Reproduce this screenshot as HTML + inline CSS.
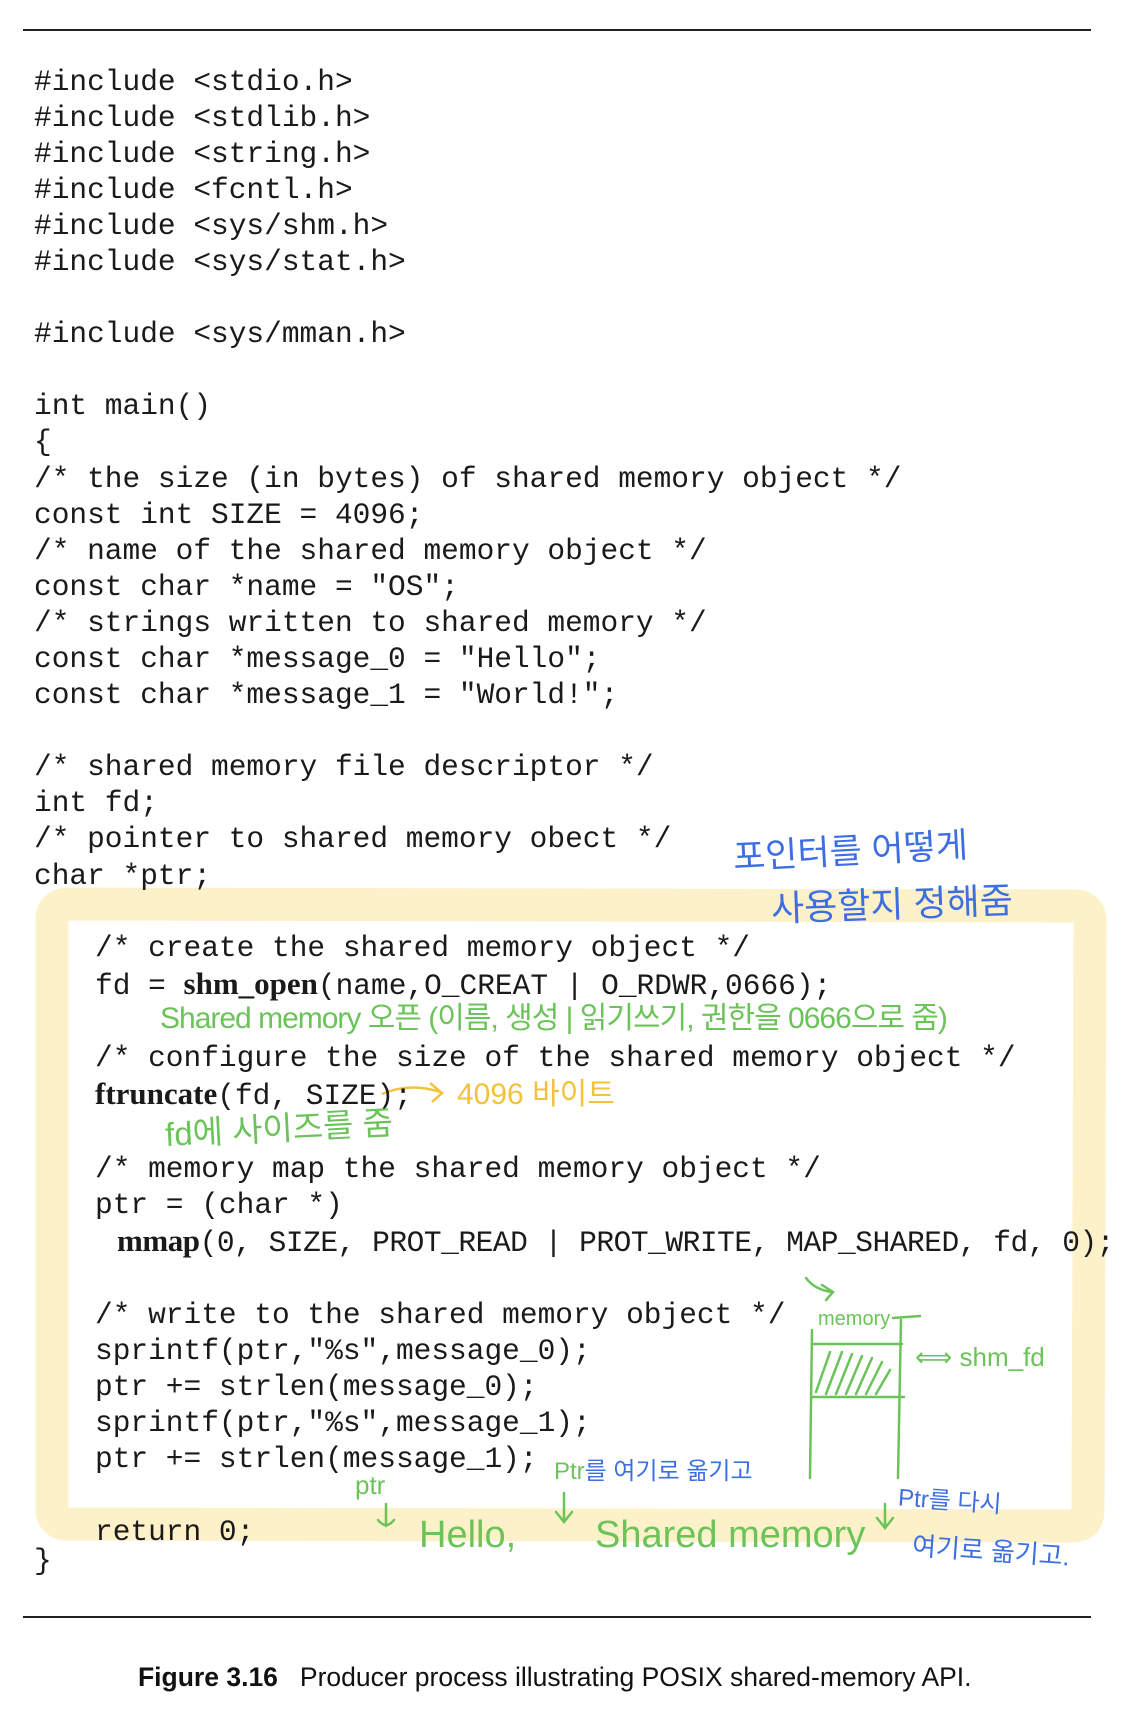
<!DOCTYPE html>
<html><head><meta charset="utf-8">
<style>
html,body{margin:0;padding:0;background:#fff;}
body{width:1146px;height:1728px;position:relative;overflow:hidden;}
.rule{position:absolute;left:23px;width:1068px;height:2px;background:#222;}
pre{position:absolute;margin:0;font-family:"Liberation Mono",monospace;font-size:29.5px;line-height:36.1px;color:#1a1a1a;}
b{font-family:"Liberation Serif",serif;font-weight:bold;font-size:31px;}
.a{position:absolute;white-space:nowrap;font-family:"Liberation Sans","Noto Sans CJK KR",sans-serif;line-height:1;}
.g{color:#6cc35a;}
.bl{color:#3d6fe3;}
.y{color:#f3c23c;}
.cap{position:absolute;top:1662px;left:138px;font-family:"Liberation Sans",sans-serif;font-size:26.5px;color:#111;white-space:nowrap;}
</style></head><body>
<div class="rule" style="top:29px"></div>
<div class="rule" style="top:1616px"></div>

<svg width="1146" height="1728" style="position:absolute;left:0;top:0">
<path d="M70 904 L1074 906 Q1090 906 1090 922 L1088 1510 Q1088 1526 1072 1526 L68 1524 Q52 1524 52 1508 L52 920 Q52 904 70 904 Z" fill="none" stroke="#fcefc0" stroke-width="33" stroke-linejoin="round" opacity="0.85"/>
<g stroke="#6cc35a" stroke-width="2.5" fill="none" stroke-linecap="round">
<path d="M806 1278 Q815 1290 832 1292 M822 1285 L833 1292 L826 1300"/>
<path d="M893 1318 L920 1316"/>
<path d="M812 1330 L810 1478"/>
<path d="M901 1320 L898 1478"/>
<path d="M812 1344 L902 1344 M812 1397 L904 1397"/>
<path d="M816 1392 L830 1352 M826 1394 L842 1352 M836 1394 L852 1354 M846 1394 L862 1356 M856 1394 L872 1358 M866 1394 L882 1362 M876 1394 L890 1370"/>
<path d="M386 1504 L386 1526 M378 1520 Q386 1530 394 1520"/>
<path d="M564 1493 L564 1520 M556 1512 L564 1522 L572 1512"/>
<path d="M885 1504 L885 1526 M877 1518 L885 1528 L893 1518"/>
</g>
<path d="M382 1094 Q410 1082 440 1092 M430 1083 L442 1093 L432 1102" stroke="#f3c23c" stroke-width="2.5" fill="none"/>
</svg>

<pre style="left:34px;top:63.5px">#include &lt;stdio.h&gt;
#include &lt;stdlib.h&gt;
#include &lt;string.h&gt;
#include &lt;fcntl.h&gt;
#include &lt;sys/shm.h&gt;
#include &lt;sys/stat.h&gt;

#include &lt;sys/mman.h&gt;

int main()
{
/* the size (in bytes) of shared memory object */
const int SIZE = 4096;
/* name of the shared memory object */
const char *name = "OS";
/* strings written to shared memory */
const char *message_0 = "Hello";
const char *message_1 = "World!";

/* shared memory file descriptor */
int fd;
/* pointer to shared memory obect */
char *ptr;</pre>

<pre style="left:95px;top:930px">/* create the shared memory object */
fd = <b>shm_open</b>(name,O_CREAT | O_RDWR,0666);

/* configure the size of the shared memory object */
<b>ftruncate</b>(fd, SIZE);

/* memory map the shared memory object */
ptr = (char *)
<span style="letter-spacing:-0.45px;padding-left:22px"><b>mmap</b>(0, SIZE, PROT_READ | PROT_WRITE, MAP_SHARED, fd, 0);</span>

/* write to the shared memory object */
sprintf(ptr,"%s",message_0);
ptr += strlen(message_0);
sprintf(ptr,"%s",message_1);
ptr += strlen(message_1);

return 0;</pre>
<pre style="left:34px;top:1543px">}</pre>

<div class="a bl" style="left:733px;top:834px;font-size:35px;transform:rotate(-3deg)">포인터를 어떻게</div>
<div class="a bl" style="left:771px;top:887px;font-size:36px;transform:rotate(-2deg)">사용할지 정해줌</div>
<div class="a g" style="left:160px;top:1004px;font-size:30px;letter-spacing:-1px">Shared memory 오픈 (이름, 생성 | 읽기쓰기, 권한을 0666으로 줌)</div>
<div class="a y" style="left:457px;top:1080px;font-size:30px">4096 바이트</div>
<div class="a g" style="left:165px;top:1112px;font-size:33px;transform:rotate(-3deg)">fd에 사이즈를 줌</div>
<div class="a g" style="left:818px;top:1309px;font-size:20px">memory</div>
<div class="a g" style="left:915px;top:1344px;font-size:26px">⟺ shm_fd</div>
<div class="a g" style="left:355px;top:1472px;font-size:26px">ptr</div>
<div class="a" style="left:554px;top:1460px;font-size:24px"><span class="g">Ptr</span><span class="bl">를 여기로 옮기고</span></div>
<div class="a g" style="left:419px;top:1516px;font-size:38px">Hello,</div>
<div class="a g" style="left:595px;top:1516px;font-size:38px">Shared memory</div>
<div class="a bl" style="left:898px;top:1490px;font-size:24px;transform:rotate(4deg)">Ptr를 다시</div>
<div class="a bl" style="left:912px;top:1538px;font-size:26px;transform:rotate(4deg)">여기로 옮기고.</div>

<div class="cap"><span style="font-weight:bold">Figure 3.16</span><span style="display:inline-block;width:22px"></span>Producer process illustrating POSIX shared-memory API.</div>
</body></html>
